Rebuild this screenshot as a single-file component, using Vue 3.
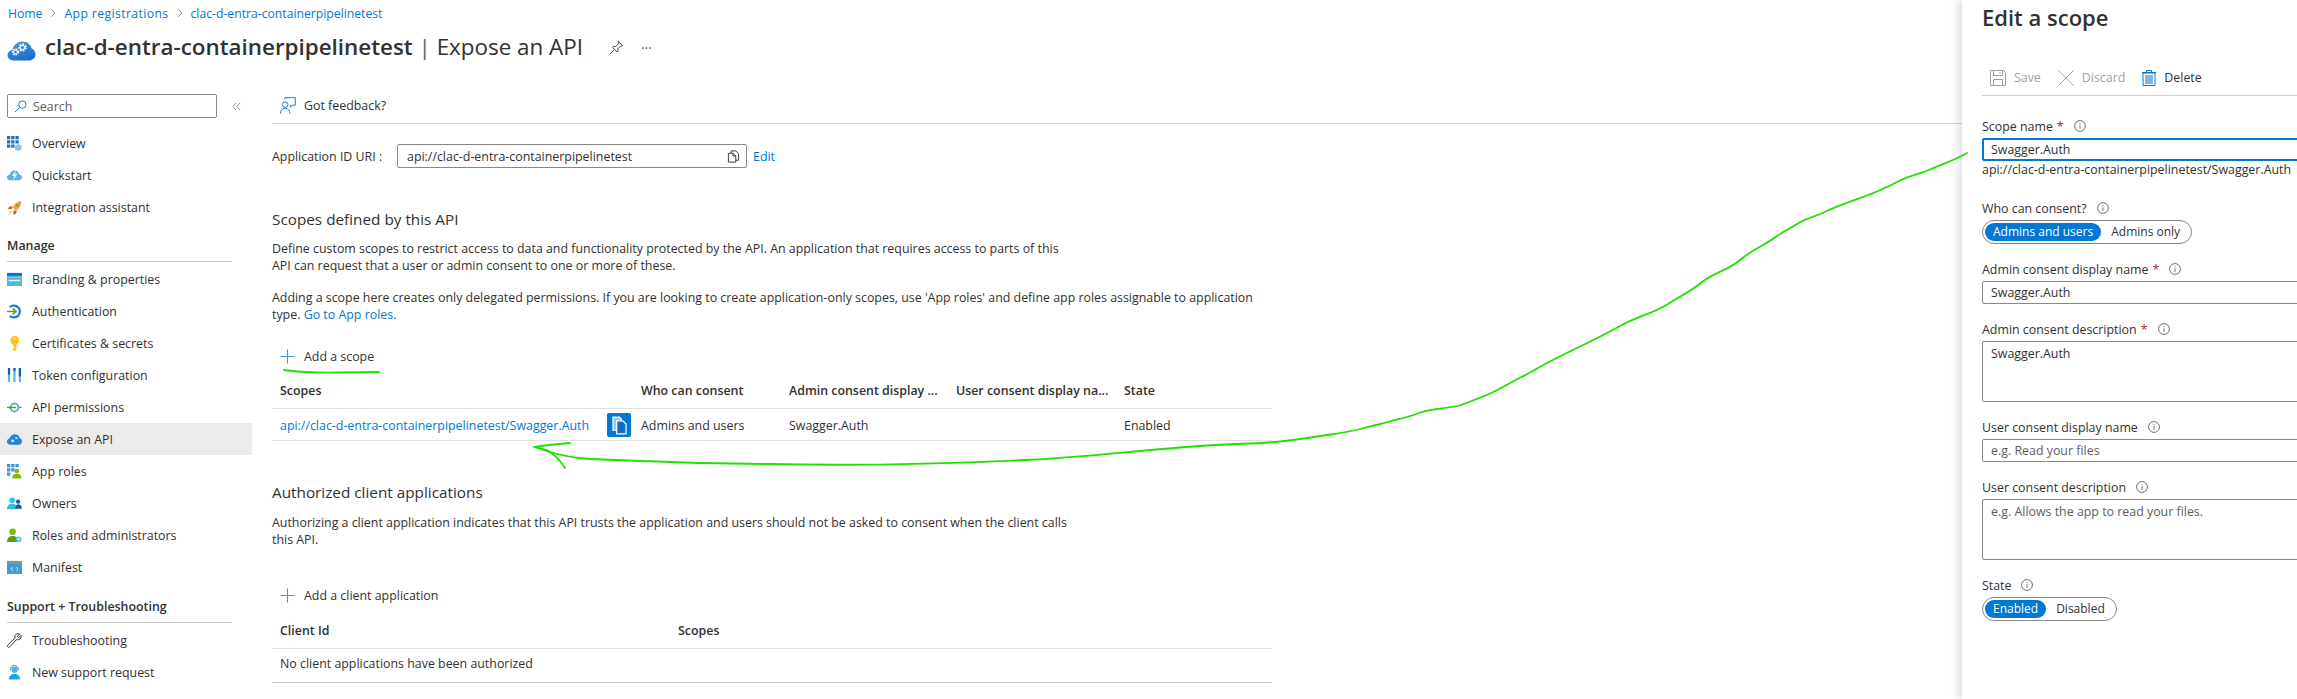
<template>
  <div class="page">
    <div class="crumbs">
      <a>Home</a>
      <svg class="chev" viewBox="0 0 8 12"><path d="M1.500 1l5 5-5 5" /></svg>
      <a class="wide">App registrations</a>
      <svg class="chev" viewBox="0 0 8 12"><path d="M1.500 1l5 5-5 5" /></svg>
      <a>clac-d-entra-containerpipelinetest</a>
    </div>

    <div class="title-row">
      <svg class="logo" viewBox="0 0 28 20">
        <defs>
          <linearGradient id="cloud" x1="0" y1="0" x2="0.6" y2="1">
            <stop offset="0" stop-color="#3f9ee8" />
            <stop offset="1" stop-color="#1b6fc6" />
          </linearGradient>
        </defs>
        <path d="M6 19.500C2.500 19.500 0 17.300 0 14.300c0-2.800 2-5 4.800-5.300C6 4 10.300 0.500 15 0.500c4.400 0 8 2.800 9 6.700 2.400 1 4 3.300 4 6.300 0 3.600-3 6-7 6z" fill="url(#cloud)" />
        <circle cx="8" cy="11" r="2.600" fill="none" stroke="#fff" stroke-width="2.200" stroke-dasharray="1.500 .9" />
        <circle cx="8" cy="11" r="1.800" fill="none" stroke="#fff" stroke-width=".8" />
        <circle cx="15" cy="6.500" r="3" fill="none" stroke="#fff" stroke-width="2.400" stroke-dasharray="1.700 1" />
        <circle cx="15" cy="6.500" r="2.100" fill="none" stroke="#fff" stroke-width=".9" />
      </svg>
      <h1><b>clac-d-entra-containerpipelinetest</b> <span class="bar">|</span> Expose an API</h1>
      <svg class="pin" viewBox="0 0 16 16"><path d="M10 1.500l4.500 4.500-1 .5-1-.2-3 3 .2 2.500-1 1-5-5 1-1 2.500.2 3-3-.2-1zM5.500 10.500l-4 4" /></svg>
      <span class="dots">···</span>
    </div>

    <div class="body">
      <aside class="sidebar">
        <div class="search-row">
          <div class="search">
            <svg viewBox="0 0 14 14"><circle cx="9" cy="5" r="4" /><path d="M6 8l-5 5" /></svg>
            <span>Search</span>
          </div>
          <svg class="collapse" viewBox="0 0 10 10"><path d="M4.500 1L1 5l3.500 4M9 1L5.500 5 9 9" /></svg>
        </div>

        <template v-for="group in navGroups" :key="group.title">
          <div v-if="group.title" class="nav-title" :class="group.cls">{{ group.title }}</div>
          <div
            v-for="item in group.items"
            :key="item.label"
            class="nav-item"
            :class="{ active: item.label === 'Expose an API' }"
          >
            <svg class="nav-icon" viewBox="0 0 16 16">
              <template v-if="item.icon === 'overview'">
                <path d="M0 0h3.500v3.500H0zM4.500 0H8v3.500H4.500zM9 0h3.500v3.500H9zM0 4.500h3.500V8H0zM4.500 4.500H8V8H4.500zM9 4.500h3.500V8H9zM0 9h3.500v3.500H0zM4.500 9H8v3.500H4.500z" fill="#2272b9" />
                <path d="M12 8.500l3.500 2v3.800L12 16l-3.500-1.700v-3.800z" fill="#8cc4ea" />
              </template>
              <template v-else-if="item.icon === 'quickstart'">
                <path d="M3.500 13C1.500 13 0 11.700 0 10s1.200-3 3-3c.5-2.500 2.500-4.500 5-4.500S12.500 4.500 13 7c1.800 0 3 1.300 3 3s-1.500 3-3.500 3z" fill="#59b4d9" />
                <path d="M9.500 2L5.500 8.500h2.300L6.500 13l4.500-6.500H8.500z" fill="#fff" />
              </template>
              <template v-else-if="item.icon === 'rocket'">
                <path d="M15 1c-4 .5-7.500 3-9 7l3 3c4-1.500 6.500-5 6-10z" fill="#f7a823" />
                <path d="M6 6.500L2 7.500 1 9.500l4 .3zM10.500 11L9.500 14.500 7 16l-.3-4.500z" fill="#e25a1c" />
                <path d="M4.500 11.500L1 16l4.500-3z" fill="#f7c948" />
                <circle cx="11" cy="5.500" r="1.300" fill="#3a96dd" />
              </template>
              <template v-else-if="item.icon === 'branding'">
                <path d="M0 1h16v14H0z" fill="#59b4d9" />
                <path d="M0 1h16v3H0z" fill="#0078d4" />
                <path d="M1 5.500h14V6H1z" fill="#bfe3f5" />
                <path d="M2 8.500h12v1.200H2z" fill="#e6f4fb" stroke="#e6f4fb" stroke-dasharray="1 .6" stroke-width=".6" />
              </template>
              <template v-else-if="item.icon === 'auth'">
                <path d="M3 3.500A6.300 6.300 0 1 1 3 12.500" fill="none" stroke="#0f78d4" stroke-width="2.200" />
                <path d="M0 8h9M6 4.800L9.500 8 6 11.200" fill="none" stroke="#57a300" stroke-width="1.700" />
              </template>
              <template v-else-if="item.icon === 'key'">
                <path d="M8 0a4.800 4.800 0 0 1 2 9.200V15l-1.800 1-1.700-1.200V13L8 12l-1.500-1V9.200A4.800 4.800 0 0 1 8 0z" fill="#fcc419" />
                <circle cx="8" cy="3" r="1" fill="#fff6cf" />
              </template>
              <template v-else-if="item.icon === 'token'">
                <path d="M1 0h2.300v15H1zM6.800 0h2.300v15H6.800zM12.600 0h2.300v15h-2.300z" fill="#59b4d9" />
                <path d="M1 0h2.300v7H1zM6.800 0h2.300v3H6.800zM12.600 0h2.300v9h-2.300z" fill="#0f5fa8" />
              </template>
              <template v-else-if="item.icon === 'apiperm'">
                <circle cx="8" cy="8" r="4.200" fill="none" stroke="#3aa0a8" stroke-width="1.600" />
                <path d="M0 8h9.500" stroke="#57a300" stroke-width="1.600" />
                <path d="M12 8h4" stroke="#7a8a94" stroke-width="1.300" />
              </template>
              <template v-else-if="item.icon === 'expose'">
                <path d="M3.500 13.500C1.500 13.500 0 12 0 10.200 0 8.500 1.200 7.200 2.800 7 3.300 4.500 5.500 2.500 8.500 2.500c2.500 0 4.500 1.500 5 3.800 1.500.6 2.500 2 2.500 3.800 0 1.900-1.500 3.400-3.500 3.400z" fill="#1f86d8" />
                <circle cx="6" cy="9.500" r="1.500" fill="#e1effa" />
                <circle cx="10" cy="6.500" r="1.300" fill="#b9d9f2" />
              </template>
              <template v-else-if="item.icon === 'approles'">
                <path d="M0 0h3.500v3.500H0zM4.500 0H8v3.500H4.500zM9 0h3.500v3.500H9zM0 4.500h3.500V8H0zM4.500 4.500H8V8H4.500zM0 9h3.500v3.500H0z" fill="#3a96dd" />
                <circle cx="10.500" cy="7.500" r="2.500" fill="#7fba00" />
                <path d="M5.500 15.500c0-3.500 2-5 5-5s5 1.500 5 5z" fill="#7fba00" />
              </template>
              <template v-else-if="item.icon === 'owners'">
                <circle cx="5.500" cy="4.500" r="3" fill="#32bde8" />
                <path d="M0 14c0-3.800 2.200-5.800 5.500-5.800S11 10.200 11 14z" fill="#32bde8" />
                <circle cx="11.800" cy="6" r="2.300" fill="#0f5fa8" />
                <path d="M9 13.500c0-2.800 1-4.600 3-4.600s4 1.800 4 4.600z" fill="#0f5fa8" />
              </template>
              <template v-else-if="item.icon === 'roles'">
                <circle cx="6" cy="4" r="3.500" fill="#7fba00" />
                <path d="M0 15c0-4.300 2.500-6.500 6-6.500s6 2.200 6 6.500z" fill="#5e9624" />
                <circle cx="12.500" cy="12" r="3" fill="#59c2ea" />
                <circle cx="12.500" cy="12" r="1" fill="#fff" />
              </template>
              <template v-else-if="item.icon === 'manifest'">
                <path d="M0 1h16v14H0z" fill="#3f9dd1" />
                <path d="M0 1h16v3H0z" fill="#8e9499" />
                <path d="M6 7.500L4.500 9.500 6 11.500M10 7.500l1.500 2-1.500 2" fill="none" stroke="#e6f4fb" stroke-width=".9" />
              </template>
              <template v-else-if="item.icon === 'wrench'">
                <path d="M15 2.500L12.500 5 11 3.500 13.500 1C11.500.2 9 1 8.500 3c-.2.800-.1 1.600.2 2.300L1 12.500c-.8.800-.8 1.700-.2 2.300s1.500.6 2.300-.2l7.200-7.700c.7.300 1.500.4 2.200.2 2-.5 3-2.800 2.500-4.600z" fill="none" stroke="#323130" stroke-width="1" />
              </template>
              <template v-else>
                <circle cx="8" cy="5" r="3.300" fill="#32bde8" />
                <path d="M2 15.500c0-4 2.500-6 6-6s6 2 6 6z" fill="#1ca7d8" />
                <path d="M3.600 5.500C3.600 2.500 5.500.5 8 .5s4.400 2 4.400 5" fill="none" stroke="#59646c" stroke-width=".9" />
              </template>
            </svg>
            <span>{{ item.label }}</span>
          </div>
        </template>
      </aside>

      <main class="main">
        <div class="toolbar">
          <svg viewBox="0 0 17 18" class="feedback">
            <circle cx="5.500" cy="8" r="3" />
            <path d="M.5 17.500c0-3.500 2-5.500 5-5.500s5 2 5 5.500M5 2.500V.7h11.300v8H13l-2 2V8.500" />
          </svg>
          <span>Got feedback?</span>
        </div>

        <div class="content">
          <div class="uri-row">
            <span class="uri-label">Application ID URI :</span>
            <div class="uri-box">
              <span>api://clac-d-entra-containerpipelinetest</span>
              <svg viewBox="0 0 14 14"><path d="M4.500 3.500V1h5l3 3v7h-3M1.500 3.500h5l3 3V13h-8zM6.500 3.500v3h3" /></svg>
            </div>
            <a class="edit">Edit</a>
          </div>

          <h3 class="scopes-head">Scopes defined by this API</h3>
          <p class="desc">Define custom scopes to restrict access to data and functionality protected by the API. An application that requires access to parts of this<br />API can request that a user or admin consent to one or more of these.</p>
          <p class="desc second">Adding a scope here creates only delegated permissions. If you are looking to create application-only scopes, use 'App roles' and define app roles assignable to application<br />type. <a>Go to App roles.</a></p>

          <div class="add-btn add-scope">
            <svg viewBox="0 0 16 16"><path d="M8 .5v15M.5 8h15" /></svg>
            <span>Add a scope</span>
          </div>

          <table class="grid scopes">
            <thead>
              <tr>
                <th v-for="col in scopeCols" :key="col">{{ col }}</th>
              </tr>
            </thead>
            <tbody>
              <tr>
                <td>
                  <div class="scope-cell">
                    <a>api://clac-d-entra-containerpipelinetest/Swagger.Auth</a>
                    <button class="copy">
                      <svg viewBox="0 0 16 20">
                        <path d="M1 1h7l2 2v12H1z" fill="#9cc9ee" stroke="#fff" stroke-width="1.200" />
                        <path d="M5 5h6.500L15 8.500V19H5z" fill="#0f6fc6" stroke="#fff" stroke-width="1.300" />
                      </svg>
                    </button>
                  </div>
                </td>
                <td>Admins and users</td>
                <td>Swagger.Auth</td>
                <td></td>
                <td>Enabled</td>
              </tr>
            </tbody>
          </table>

          <h3 class="auth-head">Authorized client applications</h3>
          <p class="desc">Authorizing a client application indicates that this API trusts the application and users should not be asked to consent when the client calls<br />this API.</p>

          <div class="add-btn add-client">
            <svg viewBox="0 0 16 16"><path d="M8 .5v15M.5 8h15" /></svg>
            <span>Add a client application</span>
          </div>

          <table class="grid clients">
            <thead>
              <tr><th>Client Id</th><th>Scopes</th></tr>
            </thead>
            <tbody>
              <tr><td colspan="2">No client applications have been authorized</td></tr>
            </tbody>
          </table>
        </div>
      </main>
    </div>

    <section class="panel">
      <h2>Edit a scope</h2>
      <div class="panel-bar">
        <div class="bar-btn off">
          <svg viewBox="0 0 16 16"><path d="M.5.500h13l2 2v13H.5zM3.500.500v5h9v-5M3.500 15.500v-6h9v6M10 2v2" /></svg>
          <span>Save</span>
        </div>
        <div class="bar-btn off">
          <svg viewBox="0 0 16 16"><path d="M.5.500l15 15M15.500.500l-15 15" /></svg>
          <span>Discard</span>
        </div>
        <div class="bar-btn del">
          <svg viewBox="0 0 14 16"><path d="M1 3h12v12.500H1zM0 2.500h14M4.500 2.500V.5h5v2" /><path class="fill" d="M3 5h8v9H3z" /></svg>
          <span>Delete</span>
        </div>
      </div>

      <div class="field first">
        <div class="label">Scope name<i>*</i><svg class="info" viewBox="0 0 12 12"><circle cx="6" cy="6" r="5.400" /><path d="M6 5.200v3.600M6 3.200v1" /></svg></div>
        <input class="input focused" value="Swagger.Auth" readonly />
        <div class="hint">api://clac-d-entra-containerpipelinetest/Swagger.Auth</div>
      </div>

      <div class="field">
        <div class="label">Who can consent?<svg class="info" viewBox="0 0 12 12"><circle cx="6" cy="6" r="5.400" /><path d="M6 5.200v3.600M6 3.200v1" /></svg></div>
        <div class="toggle">
          <span class="opt on">Admins and users</span>
          <span class="opt">Admins only</span>
        </div>
      </div>

      <div class="field">
        <div class="label">Admin consent display name<i>*</i><svg class="info" viewBox="0 0 12 12"><circle cx="6" cy="6" r="5.400" /><path d="M6 5.200v3.600M6 3.200v1" /></svg></div>
        <input class="input" value="Swagger.Auth" readonly />
      </div>

      <div class="field">
        <div class="label">Admin consent description<i>*</i><svg class="info" viewBox="0 0 12 12"><circle cx="6" cy="6" r="5.400" /><path d="M6 5.200v3.600M6 3.200v1" /></svg></div>
        <textarea class="input area" readonly>Swagger.Auth</textarea>
      </div>

      <div class="field">
        <div class="label">User consent display name<svg class="info" viewBox="0 0 12 12"><circle cx="6" cy="6" r="5.400" /><path d="M6 5.200v3.600M6 3.200v1" /></svg></div>
        <input class="input" placeholder="e.g. Read your files" readonly />
      </div>

      <div class="field">
        <div class="label">User consent description<svg class="info" viewBox="0 0 12 12"><circle cx="6" cy="6" r="5.400" /><path d="M6 5.200v3.600M6 3.200v1" /></svg></div>
        <textarea class="input area" placeholder="e.g. Allows the app to read your files." readonly></textarea>
      </div>

      <div class="field">
        <div class="label">State<svg class="info" viewBox="0 0 12 12"><circle cx="6" cy="6" r="5.400" /><path d="M6 5.200v3.600M6 3.200v1" /></svg></div>
        <div class="toggle">
          <span class="opt on">Enabled</span>
          <span class="opt">Disabled</span>
        </div>
      </div>
    </section>

    <!-- hand drawn green markup on top of the screenshot -->
    <svg class="ink" viewBox="0 0 2297 699">
      <path d="M284 370C300 372 320 373 340 372.500S370 372 379 372" />
      <path d="M1967 153C1955 160 1943 164 1931 169 1920 174 1908 176 1897 182 1872 196 1850 200 1827 211 1815 217 1806 218 1797 224 1788 230 1784 231 1777 236 1764 246 1753 249 1740 260 1727 271 1715 272 1702 282 1690 292 1680 296 1668 304 1650 315 1640 315 1620 326 1592 342 1566 352 1538 368 1526 375 1515 380 1503 387 1489 395 1475 400 1461 405 1447 409 1433 408 1419 413 1407 418 1396 419 1384 423 1377 425 1371 426 1364 428 1347 433 1331 434 1314 437 1301 439 1288 441 1275 442 1250 444 1225 444 1200 446 1140 450 1080 458 1025 460 940 464 855 466 770 464 728 464 685 463 643 461 620 460 600 460 579 458 562 456 548 452 535 447" />
      <path d="M570 443C558 444 546 445 535 447 540 449 546 449 550 452 556 456 561 462 565 468" />
    </svg>
  </div>
</template>

<script setup>
const navGroups = [
  {
    title: '',
    items: [
      { label: 'Overview', icon: 'overview' },
      { label: 'Quickstart', icon: 'quickstart' },
      { label: 'Integration assistant', icon: 'rocket' }
    ]
  },
  {
    title: 'Manage',
    items: [
      { label: 'Branding & properties', icon: 'branding' },
      { label: 'Authentication', icon: 'auth' },
      { label: 'Certificates & secrets', icon: 'key' },
      { label: 'Token configuration', icon: 'token' },
      { label: 'API permissions', icon: 'apiperm' },
      { label: 'Expose an API', icon: 'expose' },
      { label: 'App roles', icon: 'approles' },
      { label: 'Owners', icon: 'owners' },
      { label: 'Roles and administrators', icon: 'roles' },
      { label: 'Manifest', icon: 'manifest' }
    ]
  },
  {
    title: 'Support + Troubleshooting',
    cls: 'support',
    items: [
      { label: 'Troubleshooting', icon: 'wrench' },
      { label: 'New support request', icon: 'support' }
    ]
  }
]

const scopeCols = [
  'Scopes',
  'Who can consent',
  'Admin consent display ...',
  'User consent display na...',
  'State'
]
</script>

<style>
html,
body {
  margin: 0;
  background: #fff;
  overflow: hidden;
}
</style>

<style scoped>
.page {
  position: relative;
  width: 2297px;
  height: 699px;
  overflow: hidden;
  background: #fff;
  color: #323130;
  font-family: "Open Sans", "Liberation Sans", sans-serif;
  font-size: 12.4px;
  line-height: 17px;
}

a {
  color: #0078d4;
}

svg {
  display: block;
  flex: none;
}

.crumbs {
  display: flex;
  align-items: center;
  height: 26px;
  padding-left: 8px;
  font-size: 12.2px;
}

.crumbs .wide {
  letter-spacing: 0.4px;
}

.chev {
  width: 6px;
  height: 10px;
  margin: 0 8px;
  fill: none;
  stroke: #605e5c;
}

.title-row {
  display: flex;
  align-items: center;
  height: 42px;
  padding-left: 7px;
}

.logo {
  width: 29px;
  height: 20px;
  margin: 8px 9px 0 0;
}

h1 {
  margin: 0;
  font-size: 22.400px;
  line-height: 30px;
  font-weight: 400;
  white-space: nowrap;
}

h1 b {
  font-weight: 600;
}

.bar {
  color: #605e5c;
}

.pin {
  width: 15px;
  height: 15px;
  margin-left: 26px;
  fill: none;
  stroke: #323130;
}

.dots {
  margin-left: 17px;
  font-size: 14px;
  color: #605e5c;
}

.body {
  display: flex;
  margin-top: 18px;
}

.sidebar {
  width: 252px;
  flex: none;
  padding-top: 8px;
}

.search-row {
  display: flex;
  align-items: center;
  padding-left: 7px;
  margin-bottom: 9px;
}

.search {
  display: flex;
  align-items: center;
  gap: 6px;
  box-sizing: border-box;
  width: 210px;
  height: 24px;
  padding-left: 6px;
  border: 1px solid #8a8886;
  border-radius: 2px;
  color: #605e5c;
}

.search svg {
  width: 13px;
  height: 13px;
  fill: none;
  stroke: #0078d4;
}

.collapse {
  width: 9px;
  height: 9px;
  margin-left: 15px;
  fill: none;
  stroke: #8a8886;
}

.nav-title {
  box-sizing: border-box;
  width: 225px;
  height: 39px;
  margin: 0 0 1px 7px;
  padding-top: 14px;
  border-bottom: 1px solid #c8c6c4;
  font-weight: 600;
}

.nav-title.support {
  margin-top: 1px;
}

.nav-item {
  display: flex;
  align-items: center;
  height: 32px;
  padding-left: 7px;
}

.nav-item.active {
  background: #edebe9;
}

.nav-icon {
  width: 15px;
  height: 15px;
  margin-right: 10px;
}

.main {
  flex: 1;
  min-width: 0;
}

.toolbar {
  display: flex;
  align-items: center;
  gap: 8px;
  box-sizing: border-box;
  height: 38px;
  margin-left: 20px;
  padding: 1px 0 0 8px;
  border-bottom: 1px solid #d2d0ce;
}

.feedback {
  width: 16px;
  height: 17px;
  fill: none;
  stroke: #0078d4;
}

.content {
  width: 1000px;
  margin-left: 20px;
}

.uri-row {
  display: flex;
  align-items: center;
  margin-top: 20px;
}

.uri-label {
  width: 125px;
}

.uri-box {
  display: flex;
  align-items: center;
  justify-content: space-between;
  box-sizing: border-box;
  width: 350px;
  height: 24px;
  padding: 0 6px 0 9px;
  border: 1px solid #8a8886;
  border-radius: 2px;
}

.uri-box svg {
  width: 13px;
  height: 13px;
  fill: none;
  stroke: #323130;
}

.edit {
  margin-left: 6px;
}

h3 {
  margin: 0;
  font-size: 15.300px;
  line-height: 22px;
  font-weight: 400;
}

.scopes-head {
  margin-top: 40px;
}

.desc {
  margin: 10px 0 0;
  white-space: nowrap;
}

.desc.second {
  margin-top: 15px;
}

.add-btn {
  display: flex;
  align-items: center;
  gap: 9px;
  height: 24px;
  padding-left: 8px;
}

.add-btn svg {
  width: 15px;
  height: 15px;
  fill: none;
  stroke: #3a96dd;
  stroke-width: 1.200;
}

.add-scope {
  margin-top: 21px;
}

.add-client {
  margin-top: 35px;
}

.grid {
  width: 1000px;
  margin-top: 5px;
  border-collapse: collapse;
  table-layout: fixed;
}

.grid th {
  height: 35px;
  padding: 0 0 0 8px;
  text-align: left;
  font-weight: 600;
  border-bottom: 1px solid #e1dfdd;
}

.grid td {
  height: 30px;
  padding: 1px 0 0 8px;
  border-bottom: 1px solid #e1dfdd;
}

.clients th {
  height: 36px;
}

.clients td {
  height: 29px;
  padding: 0 0 4px 8px;
  border-bottom-color: #c8c6c4;
}

.scopes th:nth-child(1) {
  width: 353px;
}

.scopes th:nth-child(2) {
  width: 140px;
}

.scopes th:nth-child(3) {
  width: 159px;
}

.scopes th:nth-child(4) {
  width: 160px;
}

.clients th:nth-child(1) {
  width: 390px;
}

.scope-cell {
  display: flex;
  align-items: center;
  justify-content: space-between;
  padding-right: 2px;
}

.copy {
  display: flex;
  align-items: center;
  justify-content: center;
  width: 24px;
  height: 24px;
  padding: 0;
  border: 0;
  border-radius: 2px;
  background: #0078d4;
}

.copy svg {
  width: 15px;
  height: 19px;
}

.auth-head {
  margin-top: 40px;
}

.auth-head + .desc {
  margin-top: 11px;
}

.panel {
  position: absolute;
  top: 0;
  bottom: 0;
  left: 1962px;
  width: 335px;
  box-sizing: border-box;
  padding-left: 20px;
  overflow: hidden;
  background: #fff;
  box-shadow: -4px 0 8px rgba(0, 0, 0, 0.12);
}

h2 {
  margin: 0;
  font-size: 22px;
  line-height: 34px;
  font-weight: 600;
}

.panel-bar {
  display: flex;
  align-items: center;
  gap: 17px;
  height: 35px;
  margin-top: 26px;
  padding-left: 8px;
  border-bottom: 1px solid #d2d0ce;
}

.bar-btn {
  display: flex;
  align-items: center;
  gap: 8px;
}

.bar-btn svg {
  width: 16px;
  height: 16px;
  fill: none;
  stroke: currentColor;
}

.bar-btn.off {
  color: #a19f9d;
}

.bar-btn.del svg {
  width: 14px;
  stroke: #0078d4;
}

.bar-btn.del .fill {
  fill: #7fb7e6;
  stroke: none;
}

.field {
  margin-top: 15px;
}

.field.first {
  margin-top: 20px;
  margin-bottom: 19px;
}

.label {
  display: flex;
  align-items: center;
  height: 20px;
  margin-bottom: 2px;
}

.label i {
  margin-left: 4px;
  font-style: normal;
  color: #a4262c;
}

.info {
  width: 12px;
  height: 12px;
  margin-left: 10px;
  fill: none;
  stroke: #605e5c;
  stroke-width: 0.900;
}

.input {
  display: block;
  box-sizing: border-box;
  width: 340px;
  height: 23px;
  padding: 0 8px;
  border: 1px solid #8a8886;
  border-radius: 2px;
  outline: none;
  color: #323130;
  font-family: inherit;
  font-size: 12.400px;
  line-height: 17px;
  resize: none;
}

.input::placeholder {
  color: #605e5c;
  opacity: 1;
}

.input.focused {
  border: 2px solid #0078d4;
  padding: 0 7px;
}

.input.area {
  height: 61px;
  padding-top: 3px;
}

.hint {
  height: 18px;
  white-space: nowrap;
}

.toggle {
  display: inline-flex;
  align-items: center;
  padding: 2px;
  border: 1px solid #8a8886;
  border-radius: 12px;
  font-size: 12px;
}

.opt {
  height: 18px;
  padding: 0 9px 0 10px;
  border-radius: 9px;
  line-height: 18px;
  white-space: nowrap;
}

.opt.on {
  padding: 0 8px;
  background: #0078d4;
  color: #fff;
}

.ink {
  position: absolute;
  top: 0;
  left: 0;
  width: 2297px;
  height: 699px;
  pointer-events: none;
  fill: none;
  stroke: #22e000;
  stroke-width: 1.800;
  stroke-linecap: round;
}
</style>
